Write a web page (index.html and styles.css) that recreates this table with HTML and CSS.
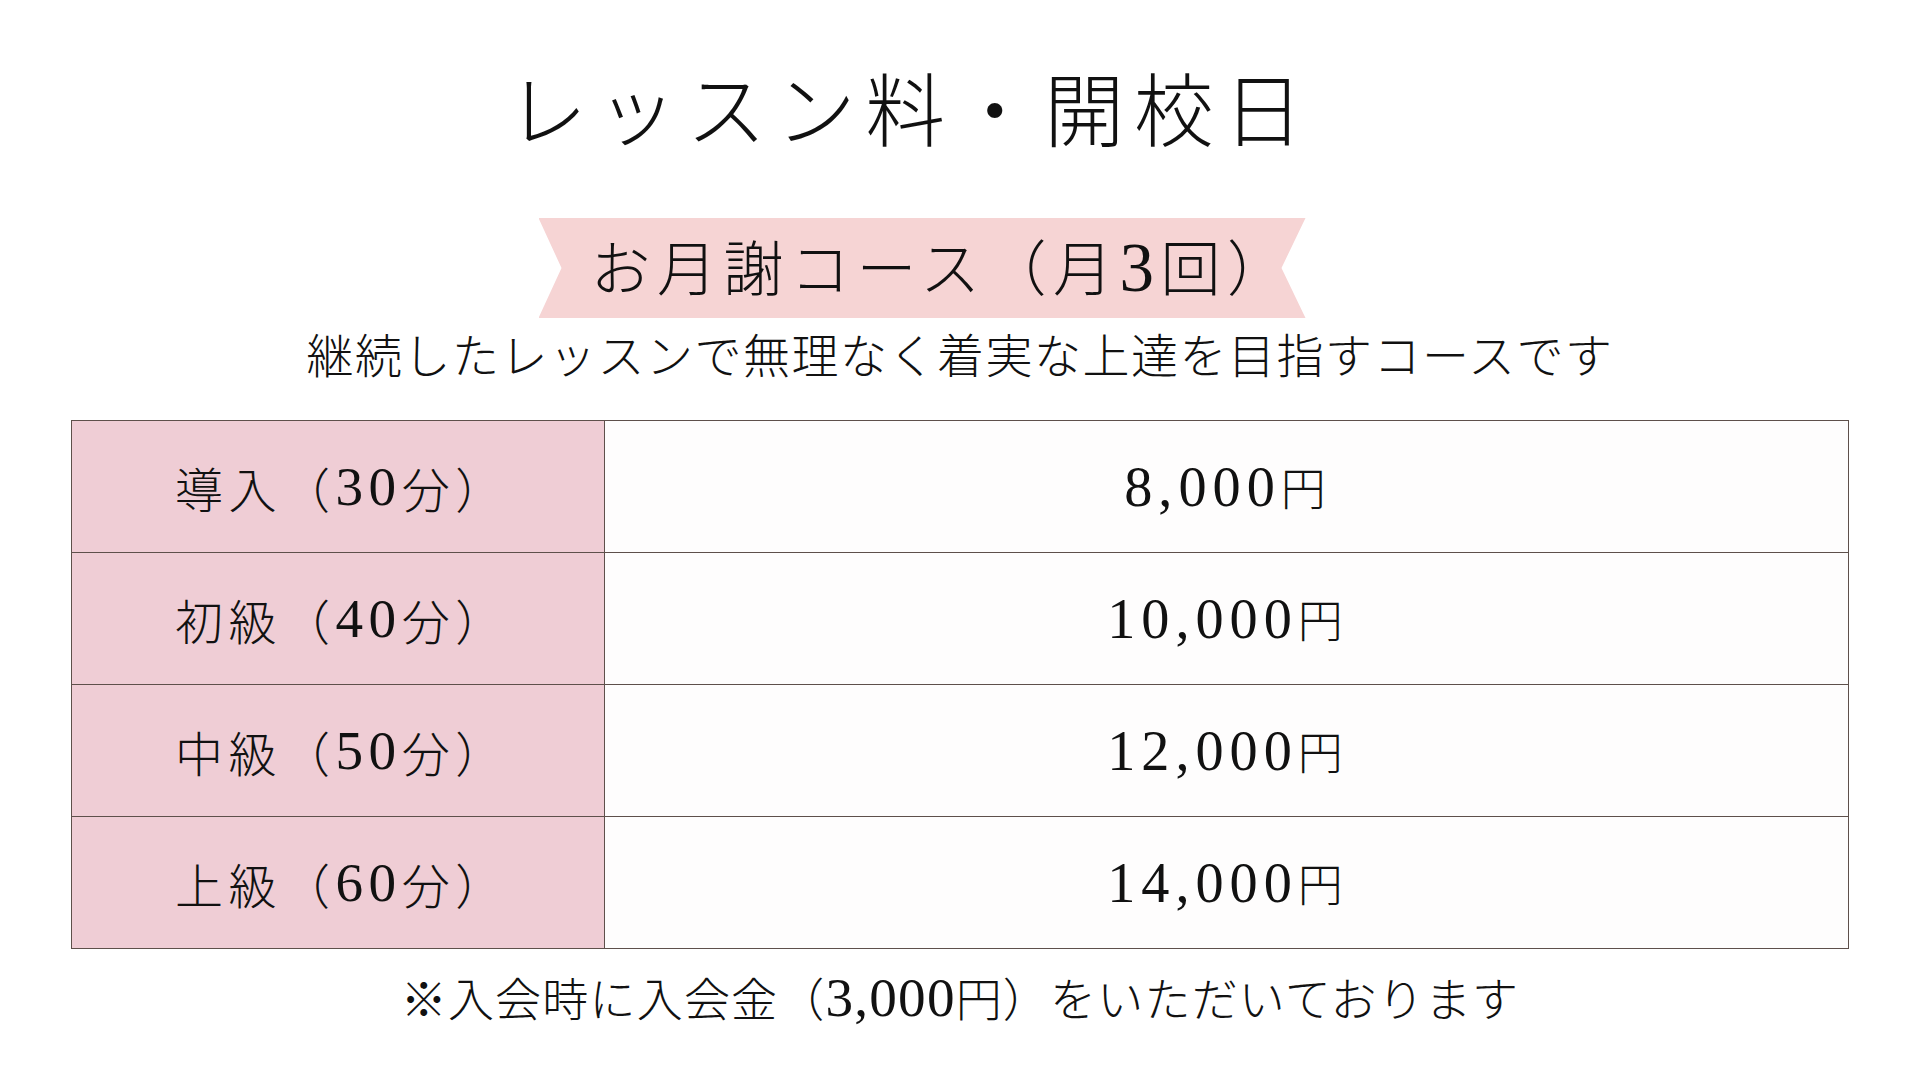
FILE: index.html
```html
<!DOCTYPE html>
<html lang="ja">
<head>
<meta charset="utf-8">
<title>レッスン料・開校日</title>
<link rel="stylesheet" href="styles.css">
</head>
<body>
<main class="page">
  <h1 class="title">レッスン料・開校日</h1>
  <div class="ribbon"><span class="ribbon-text">お月謝コース（月<span class="num">3</span>回）</span></div>
  <p class="lead">継続したレッスンで無理なく着実な上達を目指すコースです</p>
  <div class="price-table">
    <div class="row">
      <div class="cell label">導入（<span class="num">30</span>分）</div>
      <div class="cell price"><span class="num">8,000</span>円</div>
    </div>
    <div class="row">
      <div class="cell label">初級（<span class="num">40</span>分）</div>
      <div class="cell price"><span class="num">10,000</span>円</div>
    </div>
    <div class="row">
      <div class="cell label">中級（<span class="num">50</span>分）</div>
      <div class="cell price"><span class="num">12,000</span>円</div>
    </div>
    <div class="row">
      <div class="cell label">上級（<span class="num">60</span>分）</div>
      <div class="cell price"><span class="num">14,000</span>円</div>
    </div>
  </div>
  <p class="note">※入会時に入会金（<span class="num">3,000</span>円）をいただいております</p>
</main>
</body>
</html>
```
FILE: styles.css
```css
html, body {
  margin: 0;
  padding: 0;
  background: #ffffff;
}
body {
  width: 1920px;
  height: 1080px;
  overflow: hidden;
  font-family: "Noto Sans CJK JP", sans-serif;
  font-weight: 300;
  color: #111111;
}
.page {
  display: flex;
  flex-direction: column;
  align-items: center;
}
.num {
  font-family: "Liberation Serif", serif;
  font-weight: 400;
  font-size: 1.2em;
}
.title {
  margin: 60px 100px 0 0;
  font-size: 80px;
  font-weight: 300;
  line-height: 90px;
  letter-spacing: 9.5px;
}
.ribbon {
  margin: 68px 76px 0 0;
  width: 767px;
  height: 100px;
  background: #f6d4d4;
  clip-path: polygon(0 0, 100% 0, calc(100% - 24px) 50%, 100% 100%, 0 100%, 23px 50%);
  display: flex;
  align-items: center;
  justify-content: center;
  padding-left: 40px;
  box-sizing: border-box;
}
.ribbon-text {
  font-size: 60px;
  letter-spacing: 6.5px;
  line-height: 1;
}
.ribbon-text .num {
  font-size: 1.15em;
}
.lead {
  margin: 5px 0 0 0;
  font-size: 47px;
  line-height: 60px;
  letter-spacing: 1.5px;
}
.price-table {
  margin-top: 37px;
  width: 1778px;
  display: flex;
  flex-direction: column;
  border: 1px solid #5e504b;
  box-sizing: border-box;
}
.row {
  display: grid;
  grid-template-columns: 533px 1fr;
  height: 132px;
  border-top: 1px solid #5e504b;
  box-sizing: border-box;
}
.row:first-child {
  border-top: none;
  height: 131px;
}
.cell {
  display: flex;
  align-items: center;
  font-size: 48px;
  letter-spacing: 4px;
}
.label {
  background: #efcdd5;
  border-right: 1px solid #5e504b;
  padding-left: 103px;
  letter-spacing: 5.5px;
}
.label .num {
  font-size: 1.15em;
}
.price {
  background: #fefdfd;
  justify-content: center;
  font-size: 45px;
  letter-spacing: 3px;
}
.price .num {
  font-size: 1.25em;
  letter-spacing: 6px;
}
.note {
  margin: 17px 0 0 0;
  font-size: 46px;
  line-height: 60px;
  letter-spacing: 1.2px;
}
```
